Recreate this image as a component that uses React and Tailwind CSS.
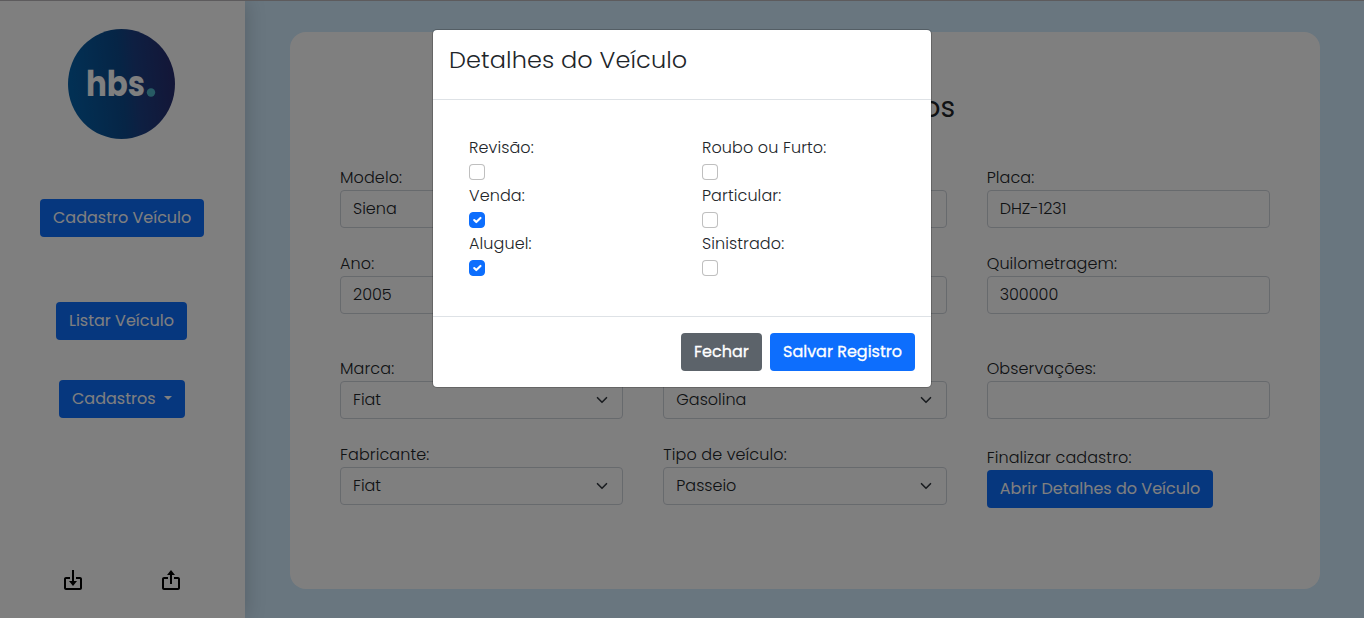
import React from "react";

function Label({ children, className = "" }) {
  return <div className={"h-6 leading-6 font-light tracking-[0.1px] whitespace-nowrap " + className}>{children}</div>;
}

function Field({ label, value, className = "", select = false }) {
  return (
    <div className={className}>
      <Label>{label}</Label>
      <div className="flex h-[38px] items-center justify-between rounded border border-[#ced4da] px-3">
        <span className="font-light leading-6 whitespace-nowrap">{value}</span>
        {select && (
          <svg viewBox="0 0 16 16" className="h-3 w-4" fill="none" stroke="#343a40" strokeWidth="2.2" strokeLinecap="round" strokeLinejoin="round">
            <path d="m2 5 6 6 6-6" />
          </svg>
        )}
      </div>
    </div>
  );
}

function Button({ children, className = "" }) {
  return (
    <button className={"flex h-[38px] shrink-0 items-center justify-start rounded pl-[13px] text-base text-white whitespace-nowrap " + className}>
      {children}
    </button>
  );
}

function Check({ label, checked = false }) {
  return (
    <div className="h-12">
      <Label>{label}</Label>
      <div
        className={
          "mt-1 flex h-4 w-4 items-center justify-center rounded border " +
          (checked ? "border-[#0d6efd] bg-[#0d6efd]" : "border-black/25 bg-white")
        }
      >
        {checked && (
          <svg viewBox="0 0 20 20" className="h-3.5 w-3.5 shrink-0" fill="none" stroke="#fff" strokeWidth="3" strokeLinecap="round" strokeLinejoin="round">
            <path d="m6 10 3 3 6-6" />
          </svg>
        )}
      </div>
    </div>
  );
}

function Logo() {
  return (
    <svg width="107" height="110" viewBox="0 0 107 110">
      <defs>
        <linearGradient id="disc" x1="0" y1="0.1" x2="1" y2="0">
          <stop offset="0" stopColor="#0560a8" />
          <stop offset="0.45" stopColor="#0c4a8c" />
          <stop offset="0.6" stopColor="#1c3f84" />
          <stop offset="1" stopColor="#292a6c" />
        </linearGradient>
      </defs>
      <ellipse cx="53.5" cy="55" rx="53.5" ry="55" fill="url(#disc)" />
      <text x="18" y="67" fontSize="35" fontWeight="700" fill="#fff" textLength="59" lengthAdjust="spacingAndGlyphs">hbs</text>
      <circle cx="83" cy="63.5" r="4.2" fill="#4fb6c8" />
    </svg>
  );
}

export default function App() {
  return (
    <div className="relative h-[618px] w-[1364px] overflow-hidden bg-[#d2ecfe] text-base text-[#212529] [font-family:Poppins,Inter,sans-serif]">
      <div className="flex h-full pt-px">
        <aside className="flex w-[245px] shrink-0 flex-col bg-white pt-7 shadow-[0_0_20px_rgba(0,0,0,0.2)]">
          <div className="ml-[68px] h-[110px]">
            <Logo />
          </div>
          <Button className="mt-[60px] ml-10 w-[164px] bg-[#0d6efd]">Cadastro Veículo</Button>
          <Button className="mt-[65px] ml-14 w-[131px] bg-[#0d6efd]">Listar Veículo</Button>
          <Button className="mt-10 ml-[59px] w-[126px] bg-[#0d6efd]">
            Cadastros
            <svg className="mb-0.5 ml-2" width="8" height="4" viewBox="0 0 8 4" fill="#fff">
              <path d="M0 0h8L4 4z" />
            </svg>
          </Button>
          <div className="mt-[150px] ml-[61px] flex gap-[74px]">
            <svg width="24" height="24" viewBox="0 0 24 24" fill="#000">
              <path d="m12 18 4-5h-3V2h-2v11H8z" />
              <path d="M19 9h-4v2h4v9H5v-9h4V9H5c-1.103 0-2 .897-2 2v9c0 1.103.897 2 2 2h14c1.103 0 2-.897 2-2v-9c0-1.103-.897-2-2-2z" />
            </svg>
            <svg width="24" height="24" viewBox="0 0 24 24" fill="#000">
              <path d="M11 16h2V7h3l-4-5-4 5h3z" />
              <path d="M5 22h14c1.103 0 2-.897 2-2v-9c0-1.103-.897-2-2-2h-4v2h4v9H5v-9h4V9H5c-1.103 0-2 .897-2 2v9c0 1.103.897 2 2 2z" />
            </svg>
          </div>
        </aside>

        <main className="mt-[31px] ml-[45px] h-[557px] w-[1030px] rounded-2xl bg-white px-[50px] pt-[59px]">
          <h1 className="h-[75px] text-center text-[28px] leading-[34px]">Cadastro de Veículos</h1>
          <div className="grid grid-cols-3 gap-x-10">
            <Field label="Modelo:" value="Siena" className="h-[86px]" />
            <Field label="Cor:" value="" className="h-[86px]" />
            <Field label="Placa:" value="DHZ-1231" className="h-[86px]" />
            <Field label="Ano:" value="2005" className="h-[105px]" />
            <Field label="Chassi:" value="" className="h-[105px]" />
            <Field label="Quilometragem:" value="300000" className="h-[105px]" />
            <Field select label="Marca:" value="Fiat" className="h-[86px]" />
            <Field select label="" value="Gasolina" className="h-[86px]" />
            <Field label="Observações:" value="" className="h-[86px]" />
            <Field select label="Fabricante:" value="Fiat" />
            <Field select label="Tipo de veículo:" value="Passeio" />
            <div className="pt-[3px]">
              <Label>Finalizar cadastro:</Label>
              <Button className="w-[226px] bg-[#0d6efd]">Abrir Detalhes do Veículo</Button>
            </div>
          </div>
        </main>
      </div>

      <div className="absolute inset-0 flex items-start justify-center border-t border-[#5d5b5d] bg-black/50 pt-7">
        <section className="w-[500px] rounded-[5px] border border-black/20 bg-white bg-clip-padding">
          <header className="h-[70px] border-b border-[#dee2e6] px-4 pt-3">
            <h2 className="text-2xl leading-9 font-light tracking-[0.11px] whitespace-nowrap">Detalhes do Veículo</h2>
          </header>
          <div className="grid h-[216px] grid-cols-2 content-start px-4 pt-9 [&>*]:pl-5">
            <Check label="Revisão:" />
            <Check label="Roubo ou Furto:" />
            <Check label="Venda:" checked />
            <Check label="Particular:" />
            <Check label="Aluguel:" checked />
            <Check label="Sinistrado:" />
          </div>
          <footer className="flex h-[71px] justify-end gap-2 border-t border-[#dee2e6] p-4">
            <Button className="w-[81px] bg-[#5c636a] [-webkit-text-stroke:0.3px_white]">Fechar</Button>
            <Button className="w-[145px] bg-[#0d6efd] [-webkit-text-stroke:0.3px_white]">Salvar Registro</Button>
          </footer>
        </section>
      </div>
    </div>
  );
}
